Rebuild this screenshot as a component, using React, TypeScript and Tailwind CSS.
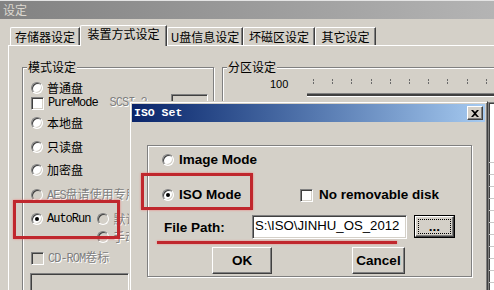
import React from 'react';

const MONO = "font-['Liberation_Mono',monospace] text-[12px] tracking-[-1px]";
const DIS = "text-[#808080] [text-shadow:1px_1px_0_#fff]";
const RAISED =
  "border border-t-white border-l-white border-r-[#404040] border-b-[#404040] shadow-[inset_-1px_-1px_0_#808080] bg-[#d4d0c8]";
const SUNKEN =
  "border border-t-[#808080] border-l-[#808080] border-r-white border-b-white shadow-[inset_1px_1px_0_#404040,inset_-1px_-1px_0_#d4d0c8]";
const ETCHED = "border border-[#808080] shadow-[inset_1px_1px_0_#fff,1px_1px_0_#fff]";

function Radio({ checked = false, disabled = false }: { checked?: boolean; disabled?: boolean }) {
  return (
    <span
      className={`flex items-center justify-center w-[12px] h-[12px] shrink-0 rounded-full border border-t-[#808080] border-l-[#808080] border-r-white border-b-white shadow-[inset_1px_1px_0_#404040,inset_-1px_-1px_0_#d4d0c8] ${
        disabled ? 'bg-[#d4d0c8]' : 'bg-white'
      }`}
    >
      {checked && <span className="w-[4px] h-[4px] rounded-full bg-black" />}
    </span>
  );
}

function Check({ disabled = false }: { disabled?: boolean }) {
  return (
    <span
      className={`block w-[13px] h-[13px] shrink-0 ${SUNKEN} ${disabled ? 'bg-[#d4d0c8]' : 'bg-white'}`}
    />
  );
}

const tabs = [
  { label: '存储器设定', w: 'w-[70px]' },
  { label: '装置方式设定', w: 'w-[87px]', active: true },
  { label: 'U盘信息设定', w: 'w-[76px]' },
  { label: '坏磁区设定', w: 'w-[72px]' },
  { label: '其它设定', w: 'w-[61px]' },
];

const ticks = [5, 24, 43, 63, 82, 101, 120, 139, 159, 178, 197];

export default function App() {
  return (
    <div className="relative w-[494px] h-[290px] overflow-hidden bg-[#d4d0c8] text-black font-['Noto_Sans_CJK_SC',sans-serif] text-[12px] leading-[16px]">
      {/* window title bar */}
      <div className="h-[19px] border-t border-[#e4e4e4] bg-linear-to-r from-[#828282] to-[#b4b4b4] flex items-center pl-[3px] text-[12px] text-[#dcd8d0]">
        设定
      </div>

      <div className="pt-[6px] pl-[8px]">
        {/* tabs */}
        <div className="flex items-end h-[20px] pl-[2px]">
          {tabs.map((t) =>
            t.active ? (
              <div
                key={t.label}
                className={`relative z-10 ${t.w} h-[21px] -mb-[1px] bg-[#d4d0c8] border-t border-l border-r border-t-white border-l-white border-r-[#404040] rounded-tl-[2px] shadow-[inset_-1px_0_0_#808080] flex justify-center pt-[1px] leading-[14px]`}
              >
                {t.label}
              </div>
            ) : (
              <div
                key={t.label}
                className={`${t.w} h-[18px] border-t border-l border-r border-t-white border-l-white border-r-[#404040] rounded-tl-[2px] shadow-[inset_-1px_0_0_#808080] flex justify-center pt-[2px] leading-[14px]`}
              >
                {t.label}
              </div>
            )
          )}
        </div>

        {/* tab panel */}
        <div className="h-[250px] border-t border-l border-white flex pl-[13px] pt-[13px] gap-[8px]">
          {/* 模式设定 */}
          <fieldset className={`w-[192px] h-[260px] shrink-0 ${ETCHED}`}>
            <legend className="ml-[4px] px-[1px] bg-[#d4d0c8] leading-[16px]">模式设定</legend>
            <div className="pl-[8px] pt-[5px] flex flex-col">
              <div className="flex items-center h-[16px] gap-[4px]">
                <Radio />
                <span>普通盘</span>
              </div>
              <div className="flex items-center h-[14px]">
                <Check />
                <span className={`ml-[4px] ${MONO}`}>PureMode</span>
                <span className={`ml-[12px] ${MONO} ${DIS}`}>SCSI-2</span>
                <span className={`ml-auto mr-[5px] w-[37px] h-[18px] ${SUNKEN} bg-[#d4d0c8]`} />
              </div>
              <div className="flex items-center h-[26px] gap-[4px]">
                <Radio />
                <span>本地盘</span>
              </div>
              <div className="flex items-center h-[22px] gap-[4px]">
                <Radio />
                <span>只读盘</span>
              </div>
              <div className="flex items-center h-[24px] gap-[4px]">
                <Radio />
                <span>加密盘</span>
              </div>
              <div className="flex items-center h-[25px] gap-[4px] whitespace-nowrap">
                <Radio disabled />
                <span className={DIS}>
                  <span className={MONO}>AES</span>盘请使用专用工具
                </span>
              </div>
              <div className="flex items-center h-[24px] whitespace-nowrap">
                <Radio checked />
                <span className={`ml-[4px] ${MONO}`}>AutoRun</span>
                <span className="ml-[7px]">
                  <Radio disabled />
                </span>
                <span className={`ml-[4px] ${DIS}`}>默认设置</span>
              </div>
              <div className="flex items-center h-[12px] whitespace-nowrap">
                <span className="ml-[66px]">
                  <Radio disabled />
                </span>
                <span className={`ml-[4px] ${DIS}`}>手动设置</span>
              </div>
              <div className="flex items-center h-[30px] gap-[4px]">
                <Check disabled />
                <span className={DIS}>
                  <span className={MONO}>CD-ROM</span>卷标
                </span>
              </div>
              <div className={`-ml-[1px] w-[99px] h-[40px] ${SUNKEN} bg-[#d4d0c8]`} />
            </div>
          </fieldset>

          {/* 分区设定 */}
          <fieldset className={`w-[290px] h-[260px] shrink-0 ${ETCHED}`}>
            <legend className="ml-[4px] px-[1px] bg-[#d4d0c8] leading-[16px]">分区设定</legend>
            <div className="pt-[1px]">
              <div className="flex h-[16px]">
                <span className="ml-[47px] font-['Liberation_Sans',sans-serif] text-[11px] leading-[16px]">100</span>
                <svg className="ml-[20px] mt-[3px] shrink-0" width="200" height="5" viewBox="0 0 200 5">
                  {ticks.map((x) => (
                    <line key={x} x1={x + 0.5} y1="0" x2={x + 0.5} y2="5" stroke="#6a6a6a" strokeWidth="1" strokeDasharray="2 1" />
                  ))}
                </svg>
              </div>
              <div className="ml-[84px] mt-[1px] h-[4px] border-t border-b border-t-[#808080] border-b-white bg-[#404040]" />
              <div className="ml-[265px] mt-[5px] h-[200px] border-l border-t border-[#808080] shadow-[inset_1px_1px_0_#404040] bg-white flex flex-col">
                <div className="h-[48px]" />
                <div className="h-[12px] border-b border-[#c8c8c8]" />
                <div className="h-[12px] border-b border-[#c8c8c8]" />
                <div className="h-[12px] border-b border-[#c8c8c8]" />
                <div className="h-[12px] border-b border-[#c8c8c8]" />
                <div className="h-[12px] border-b border-[#c8c8c8]" />
                <div className="h-[12px] border-b border-[#c8c8c8]" />
                <div className="h-[12px] border-b border-[#c8c8c8]" />
                <div className="h-[12px] border-b border-[#c8c8c8]" />
                <div className="h-[12px] border-b border-[#c8c8c8]" />
                <div className="h-[12px] border-b border-[#c8c8c8]" />
                <div className="h-[12px] border-b border-[#c8c8c8]" />
              </div>
            </div>
          </fieldset>
        </div>
      </div>

      {/* ISO Set dialog */}
      <div className="absolute left-[129px] top-[101px] w-[359px] h-[200px] bg-[#d4d0c8] border border-t-[#d4d0c8] border-l-[#d4d0c8] border-r-[#404040] border-b-[#404040] shadow-[inset_1px_1px_0_#fff,inset_-1px_-1px_0_#808080] p-[2px] font-['Liberation_Sans',sans-serif]">
        <div className="h-[18px] bg-linear-to-r from-[#0a246a] to-[#a6caf0] flex items-center pl-[2px] pr-[2px]">
          <span className="font-['Liberation_Mono',monospace] font-bold text-[11.5px] text-white leading-[14px]">ISO Set</span>
          <span className={`ml-auto w-[16px] h-[14px] ${RAISED} flex items-center justify-center`}>
            <svg width="8" height="7" viewBox="0 0 8 7">
              <path d="M0 0h2l2 2 2-2h2L5 3.5 8 7H6L4 5 2 7H0l3-3.5z" fill="#000" />
            </svg>
          </span>
        </div>
        <div className="pl-[15px] pt-[23px]">
          <div className={`w-[325px] h-[132px] ${ETCHED} text-[13.5px] font-bold leading-[16px]`}>
            <div className="pt-[4px]">
              <div className="flex items-center h-[20px] pl-[14px] gap-[5px]">
                <Radio />
                <span>Image Mode</span>
              </div>
              <div className="flex items-center h-[20px] mt-[15px] pl-[14px]">
                <div className="w-[138px] flex items-center gap-[5px]">
                  <Radio checked />
                  <span>ISO Mode</span>
                </div>
                <Check />
                <span className="ml-[6px]">No removable disk</span>
              </div>
              <div className="flex h-[24px] mt-[10px]">
                <span className="w-[104px] pl-[16px] pt-[5px]">File Path:</span>
                <div className={`w-[155px] h-[24px] ${SUNKEN} bg-white overflow-hidden whitespace-nowrap pl-[2px] font-normal text-[13.2px] leading-[20px]`}>
                  S:\ISO\JINHU_OS_2012
                </div>
                <div className="ml-[7px] w-[41px] h-[23px] border border-black">
                  <div className={`w-full h-full ${RAISED} p-[2px]`}>
                    <div className="w-full h-full border border-dotted border-black flex items-end justify-center leading-[12px]">
                      ...
                    </div>
                  </div>
                </div>
              </div>
              <div className="flex mt-[8px]">
                <div className={`ml-[64px] w-[60px] h-[27px] ${RAISED} flex items-center justify-center`}>OK</div>
                <div className={`ml-[80px] w-[53px] h-[27px] ${RAISED} flex items-center justify-center`}>Cancel</div>
              </div>
            </div>
          </div>
        </div>
      </div>

      {/* red annotations */}
      <div className="absolute left-[13px] top-[200px] w-[107px] h-[39px] border-[3px] border-[#c0272d] shadow-[0_0_2px_rgba(255,90,90,0.7)] pointer-events-none" />
      <div className="absolute left-[141px] top-[173px] w-[112px] h-[37px] border-[3px] border-[#c0272d] shadow-[0_0_2px_rgba(255,90,90,0.7)] pointer-events-none" />
      <div className="absolute left-[157px] top-[241px] w-[240px] h-[3px] bg-[#c0272d] shadow-[0_0_2px_rgba(255,90,90,0.7)] pointer-events-none" />
    </div>
  );
}
